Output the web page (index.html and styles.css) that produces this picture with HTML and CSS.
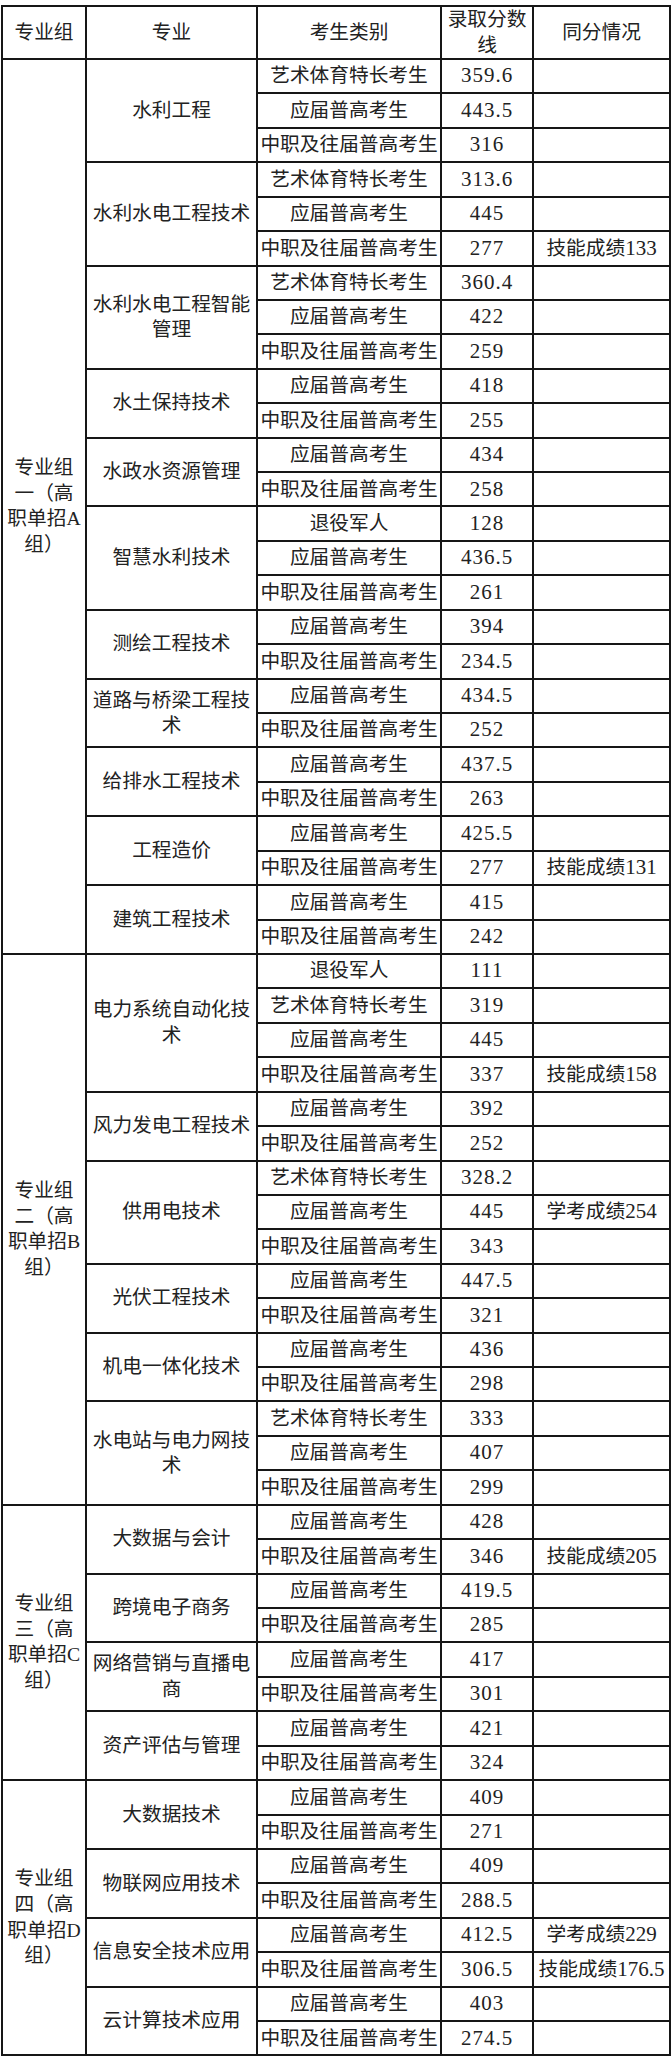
FILE: index.html
```html
<!DOCTYPE html>
<html lang="zh-CN">
<head>
<meta charset="utf-8">
<title>录取分数线</title>
<link rel="stylesheet" href="styles.css">
</head>
<body>
<table class="score">
<colgroup>
<col class="c1"><col class="c2"><col class="c3"><col class="c4"><col class="c5">
</colgroup>
<thead>
<tr class="head"><th>专业组</th><th>专业</th><th>考生类别</th><th>录取分数<br>线</th><th>同分情况</th></tr>
</thead>
<tbody>
<tr><td rowspan="26" class="grp">专业组<br>一（高<br>职单招A<br>组）</td><td rowspan="3">水利工程</td><td>艺术体育特长考生</td><td class="num">359.6</td><td></td></tr>
<tr><td>应届普高考生</td><td class="num">443.5</td><td></td></tr>
<tr><td>中职及往届普高考生</td><td class="num">316</td><td></td></tr>
<tr><td rowspan="3">水利水电工程技术</td><td>艺术体育特长考生</td><td class="num">313.6</td><td></td></tr>
<tr><td>应届普高考生</td><td class="num">445</td><td></td></tr>
<tr><td>中职及往届普高考生</td><td class="num">277</td><td>技能成绩<span class="d">133</span></td></tr>
<tr><td rowspan="3">水利水电工程智能<br>管理</td><td>艺术体育特长考生</td><td class="num">360.4</td><td></td></tr>
<tr><td>应届普高考生</td><td class="num">422</td><td></td></tr>
<tr><td>中职及往届普高考生</td><td class="num">259</td><td></td></tr>
<tr><td rowspan="2">水土保持技术</td><td>应届普高考生</td><td class="num">418</td><td></td></tr>
<tr><td>中职及往届普高考生</td><td class="num">255</td><td></td></tr>
<tr><td rowspan="2">水政水资源管理</td><td>应届普高考生</td><td class="num">434</td><td></td></tr>
<tr><td>中职及往届普高考生</td><td class="num">258</td><td></td></tr>
<tr><td rowspan="3">智慧水利技术</td><td>退役军人</td><td class="num">128</td><td></td></tr>
<tr><td>应届普高考生</td><td class="num">436.5</td><td></td></tr>
<tr><td>中职及往届普高考生</td><td class="num">261</td><td></td></tr>
<tr><td rowspan="2">测绘工程技术</td><td>应届普高考生</td><td class="num">394</td><td></td></tr>
<tr><td>中职及往届普高考生</td><td class="num">234.5</td><td></td></tr>
<tr><td rowspan="2">道路与桥梁工程技<br>术</td><td>应届普高考生</td><td class="num">434.5</td><td></td></tr>
<tr><td>中职及往届普高考生</td><td class="num">252</td><td></td></tr>
<tr><td rowspan="2">给排水工程技术</td><td>应届普高考生</td><td class="num">437.5</td><td></td></tr>
<tr><td>中职及往届普高考生</td><td class="num">263</td><td></td></tr>
<tr><td rowspan="2">工程造价</td><td>应届普高考生</td><td class="num">425.5</td><td></td></tr>
<tr><td>中职及往届普高考生</td><td class="num">277</td><td>技能成绩<span class="d">131</span></td></tr>
<tr><td rowspan="2">建筑工程技术</td><td>应届普高考生</td><td class="num">415</td><td></td></tr>
<tr><td>中职及往届普高考生</td><td class="num">242</td><td></td></tr>

<tr><td rowspan="16" class="grp">专业组<br>二（高<br>职单招B<br>组）</td><td rowspan="4">电力系统自动化技<br>术</td><td>退役军人</td><td class="num">111</td><td></td></tr>
<tr><td>艺术体育特长考生</td><td class="num">319</td><td></td></tr>
<tr><td>应届普高考生</td><td class="num">445</td><td></td></tr>
<tr><td>中职及往届普高考生</td><td class="num">337</td><td>技能成绩<span class="d">158</span></td></tr>
<tr><td rowspan="2">风力发电工程技术</td><td>应届普高考生</td><td class="num">392</td><td></td></tr>
<tr><td>中职及往届普高考生</td><td class="num">252</td><td></td></tr>
<tr><td rowspan="3">供用电技术</td><td>艺术体育特长考生</td><td class="num">328.2</td><td></td></tr>
<tr><td>应届普高考生</td><td class="num">445</td><td>学考成绩<span class="d">254</span></td></tr>
<tr><td>中职及往届普高考生</td><td class="num">343</td><td></td></tr>
<tr><td rowspan="2">光伏工程技术</td><td>应届普高考生</td><td class="num">447.5</td><td></td></tr>
<tr><td>中职及往届普高考生</td><td class="num">321</td><td></td></tr>
<tr><td rowspan="2">机电一体化技术</td><td>应届普高考生</td><td class="num">436</td><td></td></tr>
<tr><td>中职及往届普高考生</td><td class="num">298</td><td></td></tr>
<tr><td rowspan="3">水电站与电力网技<br>术</td><td>艺术体育特长考生</td><td class="num">333</td><td></td></tr>
<tr><td>应届普高考生</td><td class="num">407</td><td></td></tr>
<tr><td>中职及往届普高考生</td><td class="num">299</td><td></td></tr>

<tr><td rowspan="8" class="grp">专业组<br>三（高<br>职单招C<br>组）</td><td rowspan="2">大数据与会计</td><td>应届普高考生</td><td class="num">428</td><td></td></tr>
<tr><td>中职及往届普高考生</td><td class="num">346</td><td>技能成绩<span class="d">205</span></td></tr>
<tr><td rowspan="2">跨境电子商务</td><td>应届普高考生</td><td class="num">419.5</td><td></td></tr>
<tr><td>中职及往届普高考生</td><td class="num">285</td><td></td></tr>
<tr><td rowspan="2">网络营销与直播电<br>商</td><td>应届普高考生</td><td class="num">417</td><td></td></tr>
<tr><td>中职及往届普高考生</td><td class="num">301</td><td></td></tr>
<tr><td rowspan="2">资产评估与管理</td><td>应届普高考生</td><td class="num">421</td><td></td></tr>
<tr><td>中职及往届普高考生</td><td class="num">324</td><td></td></tr>

<tr><td rowspan="8" class="grp">专业组<br>四（高<br>职单招D<br>组）</td><td rowspan="2">大数据技术</td><td>应届普高考生</td><td class="num">409</td><td></td></tr>
<tr><td>中职及往届普高考生</td><td class="num">271</td><td></td></tr>
<tr><td rowspan="2">物联网应用技术</td><td>应届普高考生</td><td class="num">409</td><td></td></tr>
<tr><td>中职及往届普高考生</td><td class="num">288.5</td><td></td></tr>
<tr><td rowspan="2">信息安全技术应用</td><td>应届普高考生</td><td class="num">412.5</td><td>学考成绩<span class="d">229</span></td></tr>
<tr><td>中职及往届普高考生</td><td class="num">306.5</td><td>技能成绩<span class="d">176.5</span></td></tr>
<tr><td rowspan="2">云计算技术应用</td><td>应届普高考生</td><td class="num">403</td><td></td></tr>
<tr><td>中职及往届普高考生</td><td class="num">274.5</td><td></td></tr>
</tbody>
</table>
</body>
</html>
```

FILE: styles.css
```css
html, body {
  margin: 0;
  padding: 0;
  background: #ffffff;
}

body {
  padding: 5px 0 0 1px;
}

.score {
  border-collapse: collapse;
  table-layout: fixed;
  width: 668px;
  font-family: "Liberation Serif", "Noto Sans CJK SC", serif;
  font-size: 19.7px;
  line-height: 25.5px;
  color: #222222;
}

.c1 { width: 84px; }
.c2 { width: 171px; }
.c3 { width: 184px; }
.c4 { width: 92px; }
.c5 { width: 137px; }

.score th,
.score td {
  border: 2px solid #161616;
  padding: 0 1px;
  text-align: center;
  vertical-align: middle;
  white-space: nowrap;
  font-weight: normal;
}

.score tr {
  height: 34.43px;
}

.score tr.head {
  height: 52px;
}

.score .num {
  font-size: 21px;
  letter-spacing: 1px;
}

.score .d {
  font-size: 21px;
}

.score .grp {
  line-height: 25.7px;
}
```
